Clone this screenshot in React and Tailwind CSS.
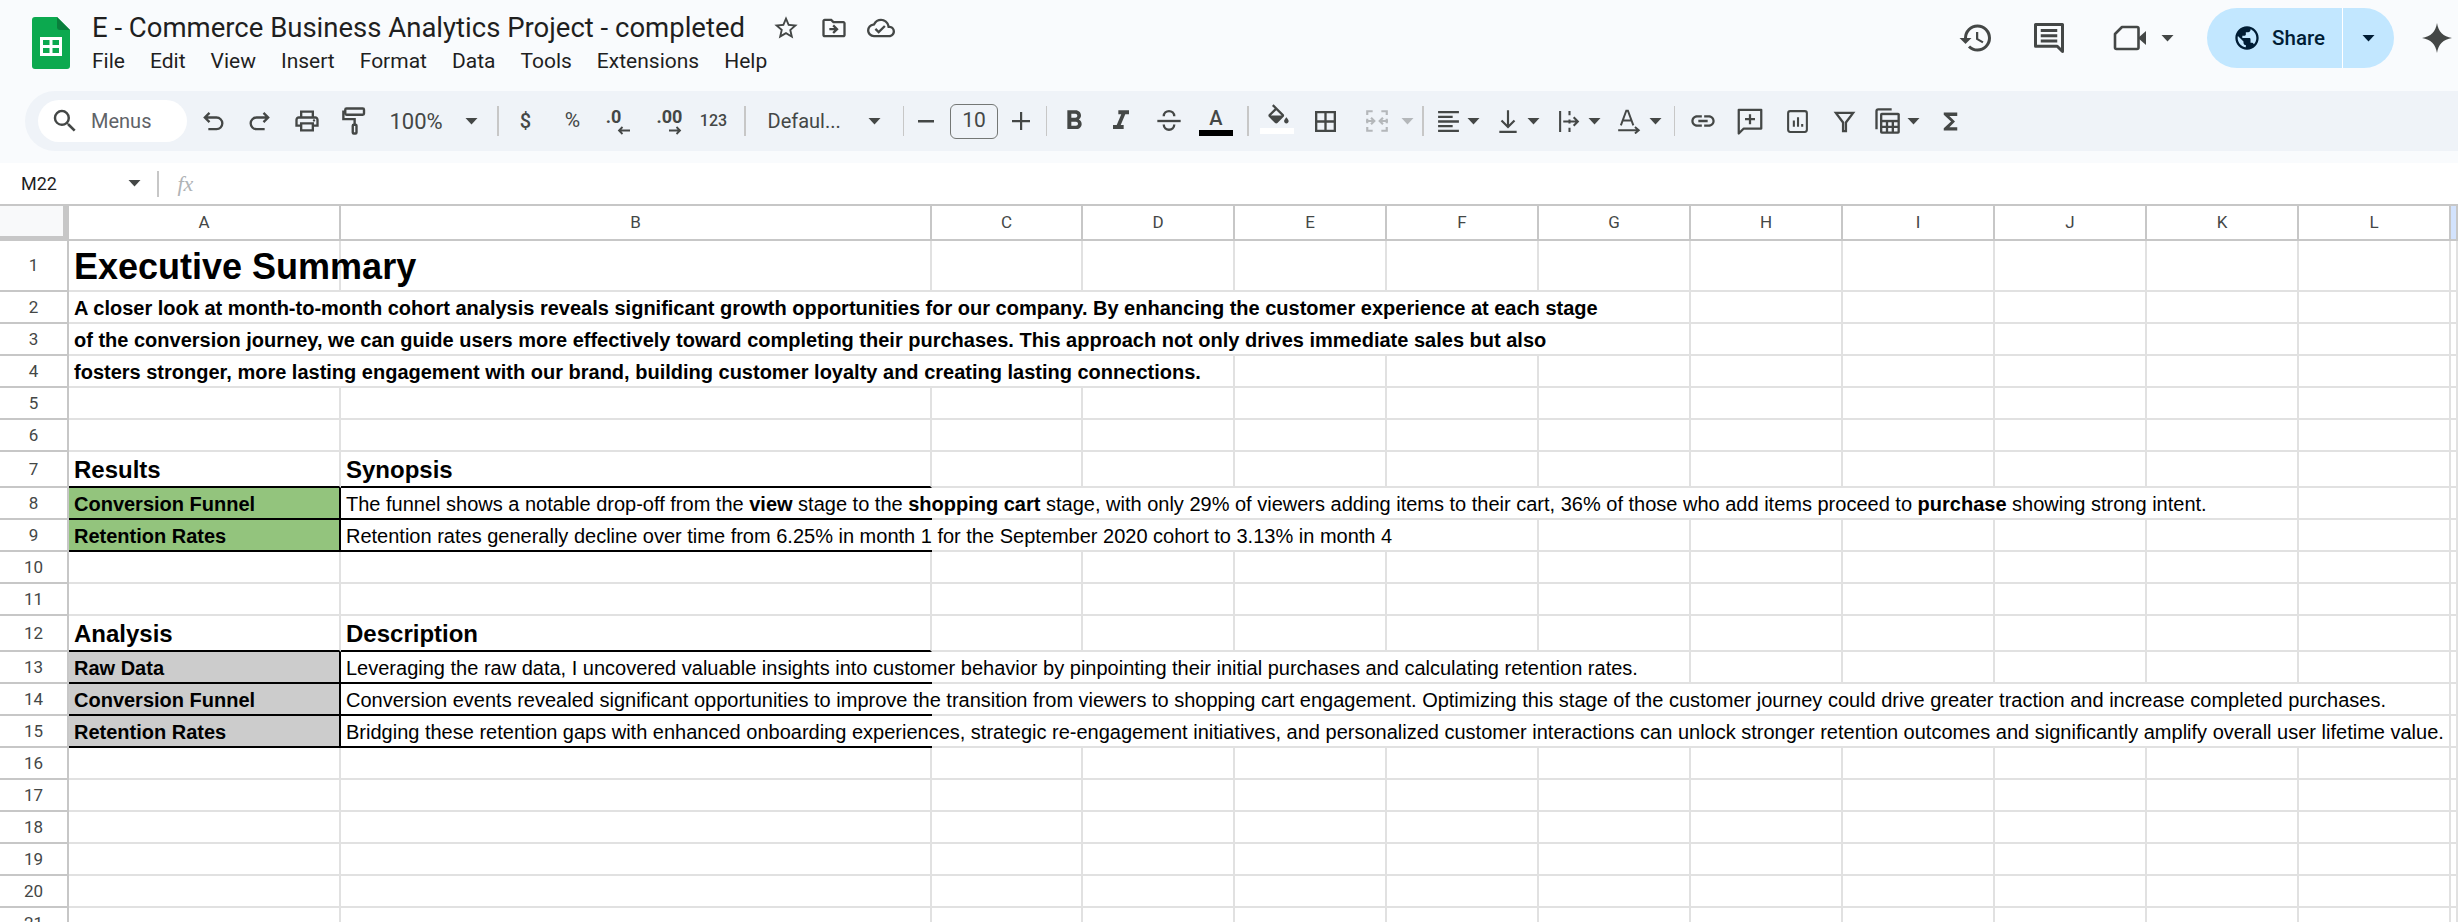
import {
  MdHistory,
  MdLink,
  MdOutlineCloudDone,
  MdOutlineDriveFileMove,
  MdOutlinePrint,
  MdPublic,
  MdSearch,
  MdStarBorder,
  MdFormatBold,
  MdFormatItalic,
  MdFunctions,
} from 'react-icons/md';

const INK = '#444746';

const columns = ['A', 'B', 'C', 'D', 'E', 'F', 'G', 'H', 'I', 'J', 'K', 'L', 'M'];

const BOLD_20 = 'font-bold text-[20px]';
const HEAD_24 = 'font-bold text-[24px]';

// text sits in one cell and spills over the next ones, `spill` = index of the last column it covers
const rows = [
  { h: 'h-[51px]', cells: { 0: { text: 'Executive Summary', cls: 'font-bold text-[36px]' } } },
  { h: 'h-[32px]', spill: [0, 6], cells: { 0: { text: 'A closer look at month-to-month cohort analysis reveals significant growth opportunities for our company. By enhancing the customer experience at each stage', cls: BOLD_20 } } },
  { h: 'h-[32px]', spill: [0, 6], cells: { 0: { text: 'of the conversion journey, we can guide users more effectively toward completing their purchases. This approach not only drives immediate sales but also', cls: BOLD_20 } } },
  { h: 'h-[32px]', spill: [0, 3], cells: { 0: { text: 'fosters stronger, more lasting engagement with our brand, building customer loyalty and creating lasting connections.', cls: BOLD_20 } } },
  { h: 'h-[32px]', cells: {} },
  { h: 'h-[32px]', cells: {} },
  { h: 'h-[36px]', black: true, cells: { 0: { text: 'Results', cls: HEAD_24 }, 1: { text: 'Synopsis', cls: HEAD_24 } } },
  {
    h: 'h-[32px]', black: true, fill: 'bg-[#93c47d]', spill: [1, 10],
    cells: {
      0: { text: 'Conversion Funnel', cls: BOLD_20 },
      1: {
        text: (
          <>
            The funnel shows a notable drop-off from the <b>view</b> stage to the <b>shopping cart</b> stage, with only 29% of viewers adding items to their cart, 36% of those who add items proceed to <b>purchase</b> showing strong intent.
          </>
        ),
        cls: 'text-[20px]',
      },
    },
  },
  {
    h: 'h-[32px]', black: true, fill: 'bg-[#93c47d]', spill: [1, 5],
    cells: {
      0: { text: 'Retention Rates', cls: BOLD_20 },
      1: { text: 'Retention rates generally decline over time from 6.25% in month 1 for the September 2020 cohort to 3.13% in month 4', cls: 'text-[20px]' },
    },
  },
  { h: 'h-[32px]', cells: {} },
  { h: 'h-[32px]', cells: {} },
  { h: 'h-[36px]', black: true, cells: { 0: { text: 'Analysis', cls: HEAD_24 }, 1: { text: 'Description', cls: HEAD_24 } } },
  {
    h: 'h-[32px]', black: true, fill: 'bg-[#cccccc]', spill: [1, 6],
    cells: {
      0: { text: 'Raw Data', cls: BOLD_20 },
      1: { text: 'Leveraging the raw data, I uncovered valuable insights into customer behavior by pinpointing their initial purchases and calculating retention rates.', cls: 'text-[20px]' },
    },
  },
  {
    h: 'h-[32px]', black: true, fill: 'bg-[#cccccc]', spill: [1, 11],
    cells: {
      0: { text: 'Conversion Funnel', cls: BOLD_20 },
      1: { text: 'Conversion events revealed significant opportunities to improve the transition from viewers to shopping cart engagement. Optimizing this stage of the customer journey could drive greater traction and increase completed purchases.', cls: 'text-[20px]' },
    },
  },
  {
    h: 'h-[32px]', black: true, fill: 'bg-[#cccccc]', spill: [1, 11],
    cells: {
      0: { text: 'Retention Rates', cls: BOLD_20 },
      1: { text: 'Bridging these retention gaps with enhanced onboarding experiences, strategic re-engagement initiatives, and personalized customer interactions can unlock stronger retention outcomes and significantly amplify overall user lifetime value.', cls: 'text-[20px]' },
    },
  },
  { h: 'h-[32px]', cells: {} },
  { h: 'h-[32px]', cells: {} },
  { h: 'h-[32px]', cells: {} },
  { h: 'h-[32px]', cells: {} },
  { h: 'h-[32px]', cells: {} },
  { h: 'h-[32px]', cells: {} },
];

function Caret({ color = INK }) {
  return (
    <svg width="13" height="7" viewBox="0 0 13 7" className="block">
      <polygon points="0.5,0 12.5,0 6.5,6.5" fill={color} />
    </svg>
  );
}

function Sep({ className = '' }) {
  return <div className={`w-[1.5px] h-[30px] bg-[#c7c7c7] shrink-0 ${className}`} />;
}

function Btn({ className = 'w-[47px]', children }) {
  return <div className={`h-[42px] shrink-0 flex items-center justify-center text-[#444746] ${className}`}>{children}</div>;
}

function Stroke({ size = 28, color = INK, width = 2, children }) {
  return (
    <svg width={size} height={size} viewBox="0 0 24 24" fill="none" stroke={color} strokeWidth={width}>
      {children}
    </svg>
  );
}

function SheetsLogo() {
  return (
    <svg width="38" height="52" viewBox="0 0 38 52" className="block">
      <path d="M3 0H25L38 13V49a3 3 0 0 1-3 3H3a3 3 0 0 1-3-3V3a3 3 0 0 1 3-3z" fill="#0ca94f" />
      <path d="M25 0L38 13H28a3 3 0 0 1-3-3z" fill="#0a7f3c" />
      <path d="M8 20H30V39H8zM11 23V28H17.5V23zM20.5 23V28H27V23zM11 31V36H17.5V31zM20.5 31V36H27V31z" fill="#fff" fillRule="evenodd" />
    </svg>
  );
}

function Toolbar() {
  return (
    <div className="ml-[25px] h-[60px] rounded-l-[30px] bg-[#eff3f8] flex items-center pl-[13px] font-['Roboto',sans-serif]">
      <div className="w-[149px] h-[42px] rounded-full bg-white flex items-center pl-[12px] shrink-0">
        <MdSearch size={30} color={INK} />
        <span className="ml-[11px] text-[20px] text-[#5f6368]">Menus</span>
      </div>
      <Btn className="w-[47px] ml-[2.5px]">
        <Stroke><path d="M9 5L5 9l4 4M5 9h10a5 5 0 0 1 0 10H8" /></Stroke>
      </Btn>
      <Btn>
        <Stroke><path d="M15 5l4 4-4 4M19 9H9a5 5 0 0 0 0 10h7" /></Stroke>
      </Btn>
      <Btn><MdOutlinePrint size={28} /></Btn>
      <Btn>
        <Stroke size={30} width={1.9}>
          <rect x="5" y="2" width="15" height="5" rx="1" />
          <path d="M5 4.500H3.500V10.500H12.500V15" />
          <rect x="11" y="15" width="3" height="7" rx="0.800" />
        </Stroke>
      </Btn>
      <div className="w-[119.5px] flex items-center pl-[12px] shrink-0 text-[#444746]">
        <span className="text-[22px] w-[75px]">100%</span>
        <Caret />
      </div>
      <Sep />
      <Btn className="w-[47px] ml-[3.5px] text-[20px] font-medium">$</Btn>
      <Btn className="w-[47px] text-[21px]">%</Btn>
      <Btn className="w-[47px]">
        <div className="flex flex-col items-end pl-[6px]">
          <span className="text-[18px] font-bold leading-[18px] -ml-[8px] mr-[10px]">.0</span>
          <svg width="14" height="9" viewBox="0 0 14 9" fill="none" stroke={INK} strokeWidth="1.8"><path d="M13 4.5H2M5.5 1L2 4.5 5.5 8" /></svg>
        </div>
      </Btn>
      <Btn className="w-[47px]">
        <div className="flex flex-col items-end pl-[6px]">
          <span className="text-[18px] font-bold leading-[18px] mr-[0px]">.00</span>
          <svg width="14" height="9" viewBox="0 0 14 9" fill="none" stroke={INK} strokeWidth="1.8"><path d="M1 4.5H12M8.5 1L12 4.5 8.5 8" /></svg>
        </div>
      </Btn>
      <Btn className="w-[47px] text-[16px] font-medium">123</Btn>
      <Sep className="ml-[7px]" />
      <div className="w-[157px] flex items-center pl-[22px] shrink-0 text-[#444746]">
        <span className="text-[20px] w-[100px]">Defaul...</span>
        <Caret />
      </div>
      <Sep />
      <Btn className="w-[43px] ml-[0px]">
        <svg width="16" height="3" viewBox="0 0 16 3"><rect width="16" height="2.5" fill={INK} /></svg>
      </Btn>
      <div className="ml-[3px] w-[48px] h-[35px] rounded-[6px] border border-[#747775] flex items-center justify-center text-[21px] text-[#444746] shrink-0">10</div>
      <Btn className="w-[46px]">
        <svg width="18" height="18" viewBox="0 0 18 18"><path d="M8 0h2.2v8H18v2.2h-7.8V18H8v-7.8H0V8h8z" fill={INK} /></svg>
      </Btn>
      <Sep className="ml-[1.5px]" />
      <Btn className="w-[45px] ml-[4.5px]"><MdFormatBold size={32} /></Btn>
      <Btn className="w-[49px]"><MdFormatItalic size={32} /></Btn>
      <Btn>
        <Stroke size={28}>
          <path d="M2 12h20" />
          <path d="M7.500 8.500c0-6 9-6 9 0M7.500 15.500c0 6 9 6 9 0" transform="translate(0 -0.5)" />
        </Stroke>
      </Btn>
      <Btn>
        <div className="flex flex-col items-center">
          <span className="text-[20px] font-medium leading-[22px]">A</span>
          <div className="w-[34px] h-[6px] bg-black mt-[1px]" />
        </div>
      </Btn>
      <Sep className="ml-[7.5px]" />
      <Btn className="w-[45px] ml-[5.5px]">
        <div className="flex flex-col items-center -mt-[5px]">
          <svg width="27" height="22" viewBox="0 0 24 19" className="ml-[4px]">
            <path d="M16.56 8.94L7.62 0 6.21 1.41l2.38 2.38-5.15 5.15c-.59.59-.59 1.54 0 2.12l5.5 5.5c.29.29.68.44 1.06.44s.77-.15 1.06-.44l5.5-5.5c.59-.58.59-1.53 0-2.12zM5.21 10L10 5.21 14.79 10H5.21zM19 11.5s-2 2.17-2 3.5c0 1.1.9 2 2 2s2-.9 2-2c0-1.33-2-3.5-2-3.5z" fill={INK} />
          </svg>
          <div className="w-[34px] h-[6px] bg-white mt-[2px]" />
        </div>
      </Btn>
      <Btn className="w-[53px]">
        <svg width="21" height="21" viewBox="3 3 18 18"><path d="M3 3v18h18V3H3zm8 16H5v-6h6v6zm0-8H5V5h6v6zm8 8h-6v-6h6v6zm0-8h-6V5h6v6z" fill={INK} /></svg>
      </Btn>
      <Btn className="w-[49px]">
        <Stroke size={26} color="#b4b7ba">
          <path d="M8 3H3v3.500M3 10v4M3 17.500V21h5M16 3h5v3.500M21 10v4M21 17.500V21h-5" />
          <path d="M2 12h7M6.500 9l3 3-3 3M22 12h-7M17.500 9l-3 3 3 3" />
        </Stroke>
      </Btn>
      <div className="w-[13px] shrink-0"><Caret color="#b4b7ba" /></div>
      <Sep className="ml-[8px]" />
      <Btn className="w-[38px] ml-[5.5px]">
        <Stroke size={25} width={2.200}>
          <path d="M2 3h20M2 7.500h14M2 12h20M2 16.500h14M2 21h20" />
        </Stroke>
      </Btn>
      <div className="w-[14px] shrink-0"><Caret /></div>
      <Btn className="w-[38px] ml-[8px]">
        <Stroke size={26}>
          <path d="M12 2v15M6 11.500l6 6 6-6M4 22h16" />
        </Stroke>
      </Btn>
      <div className="w-[14px] shrink-0"><Caret /></div>
      <Btn className="w-[38px] ml-[9px]">
        <Stroke size={25}>
          <path d="M3 2v20M12 2v4M12 10v4M12 18v4M6 12h14M16 8l4 4-4 4" />
        </Stroke>
      </Btn>
      <div className="w-[14px] shrink-0"><Caret /></div>
      <Btn className="w-[38px] ml-[8px]">
        <Stroke size={26} width={1.8}>
          <path d="M4.500 16L9.500 2.500h1.500L16 16M6.300 11.500h8" />
          <path d="M2 20.500h19M17.500 17.500l3.500 3-3.500 3" />
        </Stroke>
      </Btn>
      <div className="w-[14px] ml-[1px] shrink-0"><Caret /></div>
      <Sep className="ml-[10.5px]" />
      <Btn className="w-[47px] ml-[4.5px]"><MdLink size={28} /></Btn>
      <Btn>
        <Stroke size={30} width={1.800}>
          <path d="M3 3h18v15H7l-4 4zM12 6.500v8M8 10.500h8" strokeLinejoin="round" />
        </Stroke>
      </Btn>
      <Btn>
        <Stroke size={25} width={2}>
          <rect x="3" y="2" width="18" height="20" rx="2" />
          <path d="M8.500 17v-6M12.500 17V8M16.500 17v-2.500" />
        </Stroke>
      </Btn>
      <Btn>
        <Stroke size={23} width={2.400}>
          <path d="M3 3h18l-7.500 10v9h-3v-9z" strokeLinejoin="miter" />
        </Stroke>
      </Btn>
      <Btn className="w-[39px]">
        <svg width="28" height="28" viewBox="0 0 24 24" fill="none">
          <path d="M3 19V3.500A1.500 1.500 0 0 1 4.500 2H16" stroke={INK} strokeWidth="2" />
          <rect x="6" y="5" width="17" height="18" rx="1.500" fill={INK} />
          <rect x="8" y="7" width="13" height="4" fill="#eff3f8" />
          <path d="M8 13h3v3H8zM13 13h3v3h-3zM18 13h3v3h-3zM8 18h3v3H8zM13 18h3v3h-3zM18 18h3v3h-3z" fill="#eff3f8" />
        </svg>
      </Btn>
      <div className="w-[14px] ml-[0.5px] shrink-0"><Caret /></div>
      <Btn className="w-[47px] ml-[6px]"><MdFunctions size={27} /></Btn>
    </div>
  );
}

function TopBar() {
  return (
    <div className="h-[91px] flex font-['Roboto',sans-serif]">
      <div className="ml-[32px] mt-[17px] shrink-0"><SheetsLogo /></div>
      <div className="ml-[22px] shrink-0">
        <div className="h-[44px] flex items-center mt-[6px] text-[27.500px] text-[#1f1f1f]">
          <span>E - Commerce Business Analytics Project - completed</span>
          <MdStarBorder size={28} color={INK} className="ml-[27px]" />
          <MdOutlineDriveFileMove size={28} color={INK} className="ml-[20px]" />
          <MdOutlineCloudDone size={28} color={INK} className="ml-[19px]" />
        </div>
        <div className="flex gap-[25px] text-[21px] text-[#1f1f1f] -mt-[1px] leading-[24px]">
          {['File', 'Edit', 'View', 'Insert', 'Format', 'Data', 'Tools', 'Extensions', 'Help'].map((m) => (
            <span key={m}>{m}</span>
          ))}
        </div>
      </div>
      <div className="ml-auto flex items-center h-[76px] pr-[6.400px]">
        <MdHistory size={36} color={INK} />
        <svg width="36" height="36" viewBox="0 0 24 24" fill="none" stroke={INK} strokeWidth="2" className="ml-[37px]">
          <path d="M3 3h18v18l-3.500-3.500H3z" strokeLinejoin="round" />
          <path d="M6.500 7h11M6.500 10.500h11M6.500 14h11" />
        </svg>
        <svg width="34" height="26" viewBox="0 0 34 26" fill="none" className="ml-[46px]">
          <path d="M9 2H24a1.500 1.500 0 0 1 1.500 1.500V22.500A1.500 1.500 0 0 1 24 24H3.500A1.500 1.500 0 0 1 2 22.500V9z" stroke={INK} strokeWidth="2.600" strokeLinejoin="round" />
          <path d="M25 13L33 6V20z" fill={INK} />
        </svg>
        <div className="ml-[14px]"><Caret /></div>
        <div className="ml-[33.500px] w-[186.500px] h-[60px] rounded-[30px] bg-[#c2e7ff] flex items-center text-[#001d35] overflow-hidden">
          <div className="w-[136px] h-full flex items-center pl-[26px] border-r-[1.500px] border-white">
            <MdPublic size={28} />
            <span className="ml-[11px] text-[20.500px] font-medium">Share</span>
          </div>
          <div className="flex-1 flex justify-center"><Caret color="#001d35" /></div>
        </div>
        <svg width="30" height="30" viewBox="0 0 24 24" className="ml-[28px]">
          <path d="M12 0c1 7 5 11 12 12-7 1-11 5-12 12-1-7-5-11-12-12 7-1 11-5 12-12z" fill={INK} />
        </svg>
      </div>
    </div>
  );
}

function FormulaBar() {
  return (
    <div className="h-[41px] shrink-0 flex items-center bg-white font-['Roboto',sans-serif]">
      <span className="ml-[21px] w-[107px] text-[18px] text-[#1f1f1f]">M22</span>
      <Caret />
      <div className="ml-[16px] w-[1.500px] h-[26px] bg-[#c7c7c7]" />
      <span className="ml-[19px] text-[22px] italic text-[#b0b3b6] font-['Liberation_Serif',serif]">fx</span>
    </div>
  );
}

function Cell({ row, col }) {
  const cell = row.cells[col];
  const covered = row.spill && col >= row.spill[0] && col < row.spill[1];
  const isBlack = row.black && col <= 1;
  const isLabel = row.fill && col === 0;
  const cls = [
    row.h,
    'flex items-center pl-[5px] pt-[2px] whitespace-nowrap min-w-0 text-black box-border',
    isBlack ? 'border-b-2 border-b-black' : 'border-b-2 border-b-[#e1e1e1]',
    isLabel ? 'border-r-2 border-r-black' : covered ? '' : 'border-r-2 border-r-[#e1e1e1]',
    isLabel ? row.fill : '',
    cell ? cell.cls : '',
  ].join(' ');
  return <div className={cls}>{cell && <span>{cell.text}</span>}</div>;
}

export default function App() {
  return (
    <div className="w-[2458px] h-[922px] overflow-hidden bg-white flex flex-col">
      <div className="bg-[#f9fbfd] h-[163px] shrink-0">
        <TopBar />
        <Toolbar />
      </div>
      <FormulaBar />
      <div className="grid grid-cols-[69px_272px_591px_151px_repeat(9,152px)_1fr] font-['Liberation_Sans',Arial,sans-serif]">
        <div className="h-[37px] bg-[#f8f9fa] border-t-2 border-t-[#c7c7c7] border-b-[5px] border-b-[#c7c7c7] border-r-[6px] border-r-[#c7c7c7]" />
        {columns.map((c) => (
          <div
            key={c}
            className={`h-[37px] flex items-center justify-center text-[17px] text-[#444746] font-['Roboto',sans-serif] border-t-2 border-t-[#c7c7c7] border-b-2 border-b-[#c7c7c7] border-r-2 border-r-[#c7c7c7] ${c === 'M' ? 'bg-[#d3e3fd]' : ''}`}
          >
            {c === 'M' ? '' : c}
          </div>
        ))}
        {rows.map((row, i) => (
          <div key={i} className="contents">
            <div className={`${row.h} flex items-center justify-center pt-[1px] text-[17px] text-[#444746] font-['Roboto',sans-serif] border-r-2 border-r-[#c7c7c7] border-b-2 border-b-[#c7c7c7]`}>
              {i + 1}
            </div>
            {columns.map((c, col) => (
              <Cell key={c} row={row} col={col} />
            ))}
          </div>
        ))}
      </div>
    </div>
  );
}
